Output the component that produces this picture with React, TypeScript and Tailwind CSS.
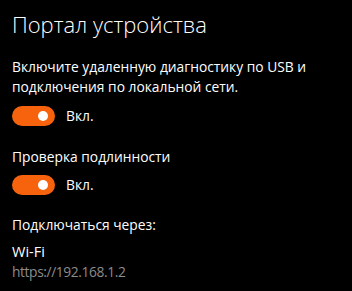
import React from 'react';

const Toggle: React.FC = () => (
  <div className="flex items-center gap-[11px]">
    <div className="relative w-[43px] h-[20px] rounded-full bg-[#f7630c]">
      <div className="absolute right-[7px] top-[5px] w-[10px] h-[10px] rounded-full bg-white" />
    </div>
    <span className="text-[13.8px] leading-[20px] text-white">Вкл.</span>
  </div>
);

export default function App() {
  return (
    <div
      className="w-[352px] h-[291px] bg-black text-white px-[12px] pt-[10px] overflow-hidden"
      style={{ fontFamily: '"Open Sans", "Noto Sans", sans-serif' }}
    >
      <h1 className="text-[22px] leading-[28px] font-light">Портал устройства</h1>
      <p className="mt-[19px] text-[13.8px] leading-[20px]">
        Включите удаленную диагностику по USB и подключения по локальной сети.
      </p>
      <div className="mt-[9px]">
        <Toggle />
      </div>
      <div className="mt-[21px] text-[13.8px] leading-[20px]">Проверка подлинности</div>
      <div className="mt-[8px]">
        <Toggle />
      </div>
      <div className="mt-[20px] text-[13.8px] leading-[20px]">Подключаться через:</div>
      <div className="mt-[7px] text-[14.5px] leading-[20px]">Wi-Fi</div>
      <div className="text-[13.8px] leading-[20px] tracking-[-0.4px] text-[#8c8c8c]">https://192.168.1.2</div>
    </div>
  );
}
